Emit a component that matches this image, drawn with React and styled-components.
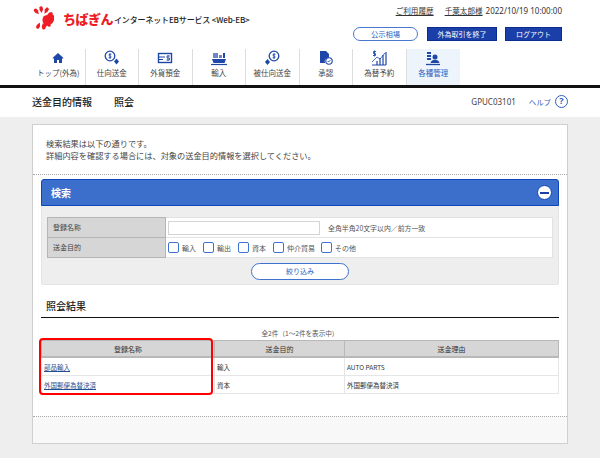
import styled, { createGlobalStyle } from 'styled-components';

const navItems = [
    { label: 'トップ(外為)', icon: 'home' },
    { label: '仕向送金', icon: 'coin' },
    { label: '外貨預金', icon: 'card' },
    { label: '輸入', icon: 'ship' },
    { label: '被仕向送金', icon: 'coinBack' },
    { label: '承認', icon: 'doc' },
    { label: '為替予約', icon: 'chart' },
    { label: '各種管理', icon: 'admin', active: true },
];

function NavIcon({ name }) {
    const c = '#1f47a8';
    if (name === 'home') return (
        <svg width="14" height="14" viewBox="0 0 14 14"><path d="M7 2 1.500 7l.8.8L3 7.300V12h3V9h2v3h3V7.300l.7.5.8-.8z" fill={c} /></svg>
    );
    if (name === 'coin') return (
        <svg width="16" height="16" viewBox="0 0 16 16">
            <circle cx="6" cy="6" r="4.800" fill="none" stroke={c} strokeWidth="1.300" />
            <path d="M7.500 4.200H5.200v1.800h1.600v1.800H4.500M6 3v6" fill="none" stroke={c} strokeWidth=".8" />
            <path d="m12.500 8.500 2.500 3-2.500 3-2.500-3z" fill={c} />
        </svg>
    );
    if (name === 'coinBack') return (
        <svg width="16" height="16" viewBox="0 0 16 16">
            <circle cx="10" cy="6" r="4.800" fill="none" stroke={c} strokeWidth="1.300" />
            <path d="M11.500 4.200H9.200v1.800h1.600v1.800H8.500M10 3v6" fill="none" stroke={c} strokeWidth=".8" />
            <path d="m3.500 9 2.500 3-2.500 3L1 12z" fill={c} />
        </svg>
    );
    if (name === 'card') return (
        <svg width="16" height="14" viewBox="0 0 16 14">
            <rect x="1.500" y="2.500" width="13" height="9" fill="none" stroke={c} strokeWidth="1.400" />
            <path d="M2 6h6M2 8.500h4" stroke={c} strokeWidth="1" />
            <path d="M13 5h-3v2h2.500v2H9.500M11 4v6" fill="none" stroke={c} strokeWidth=".8" />
        </svg>
    );
    if (name === 'ship') return (
        <svg width="16" height="15" viewBox="0 0 16 15">
            <path d="M1 8h14l-1.500 4h-11z" fill={c} />
            <path d="M2 2h5v5H2zM8 4h3v3H8z" fill="#6f86c4" />
            <path d="M12 2h2v5h-2z" fill={c} />
            <path d="M0 13.500h16" stroke={c} strokeWidth="1.200" />
        </svg>
    );
    if (name === 'doc') return (
        <svg width="14" height="16" viewBox="0 0 14 16">
            <path d="M1 1h6l3 3v3.500A4 4 0 0 0 6 13H1z" fill={c} />
            <circle cx="10" cy="11" r="3.200" fill="none" stroke={c} strokeWidth="1.100" />
            <path d="m8.600 11 1 1 1.800-1.800" fill="none" stroke={c} strokeWidth=".9" />
        </svg>
    );
    if (name === 'chart') return (
        <svg width="16" height="16" viewBox="0 0 16 16">
            <path d="M1 15h14" stroke={c} strokeWidth="1" />
            <path d="M6 15v-4M9 15V8M12 15V5M15 15V2" stroke={c} strokeWidth="1.200" />
            <path d="M1 12 6 7l3 2 5-6" fill="none" stroke={c} strokeWidth=".8" />
            <path d="M5 1.500H2.500v2h2v2H2M3.500 .5v6" fill="none" stroke={c} strokeWidth=".9" />
        </svg>
    );
    return (
        <svg width="16" height="15" viewBox="0 0 16 15">
            <path d="M2 1h4v2H2zM2 4h4v2H2zM2 7h4v2H2z" fill={c} />
            <circle cx="10" cy="6" r="2.500" fill={c} />
            <path d="M5.500 12c.5-2.500 2.500-3.200 4.500-3.200s4 .7 4.500 3.200z" fill={c} />
            <path d="M1 13.500h14" stroke={c} strokeWidth="1.300" />
        </svg>
    );
}

function LogoMark() {
    const petals = [-10, 25, 60, 95, 130, 165, 200, 235];
    return (
        <svg width="23" height="26" viewBox="0 0 23 26">
            {petals.map(a => (
                <path key={a} d="M9.200 4.500 9.500 2c.8-1 2.200-1 3 0l.3 2.500L11 8z" fill="#ee1c25" transform={`rotate(${a - 30} 11 13)`} />
            ))}
            <path d="M13 11c3-1.500 7-1.500 9.500-1 1.200 2 .8 6-1 8-1.500 1.500-4 2-5 2l-3.500 4.500L13 19c-2-2-2-6 0-8z" fill="#ee1c25" />
        </svg>
    );
}

export default function App() {
    return (
        <Page>
            <GlobalStyle />
            <Header>
                <TopRow>
                    <Brand>
                        <LogoMark />
                        <BankName>ちばぎん</BankName>
                        <ServiceName>インターネットEBサービス &lt;Web-EB&gt;</ServiceName>
                    </Brand>
                    <Utility>
                        <InfoLine>
                            <InfoLink>ご利用履歴</InfoLink>
                            <InfoLink>千葉太郎様</InfoLink>
                            <DateText>2022/10/19 10:00:00</DateText>
                        </InfoLine>
                        <ButtonLine>
                            <PillLink>公示相場</PillLink>
                            <NavyButton $width={70}>外為取引を終了</NavyButton>
                            <NavyButton $width={57}>ログアウト</NavyButton>
                        </ButtonLine>
                    </Utility>
                </TopRow>
                <Nav>
                    {navItems.map(item => (
                        <NavItem key={item.label} $active={item.active}>
                            <IconSlot><NavIcon name={item.icon} /></IconSlot>
                            <span>{item.label}</span>
                        </NavItem>
                    ))}
                </Nav>
            </Header>
            <TitleBar>
                <TitleText>
                    <span>送金目的情報</span>
                    <span>照会</span>
                </TitleText>
                <TitleSide>
                    <span>GPUC03101</span>
                    <HelpLink>ヘルプ<HelpMark>?</HelpMark></HelpLink>
                </TitleSide>
            </TitleBar>
            <Card>
                <Intro>
                    検索結果は以下の通りです。<br />
                    詳細内容を確認する場合には、対象の送金目的情報を選択してください。
                </Intro>
                <CardBody>
                    <SearchPanel>
                        <SearchHeader>
                            <span>検索</span>
                            <CollapseButton><i /></CollapseButton>
                        </SearchHeader>
                        <SearchBody>
                            <FormTable>
                                <FormLabel>登録名称</FormLabel>
                                <FormValue>
                                    <NameInput />
                                    <Hint>全角半角20文字以内／前方一致</Hint>
                                </FormValue>
                                <FormLabel $last>送金目的</FormLabel>
                                <FormValue $last>
                                    {['輸入', '輸出', '資本', '仲介貿易', 'その他'].map(t => (
                                        <CheckLabel key={t}><CheckBox />{t}</CheckLabel>
                                    ))}
                                </FormValue>
                            </FormTable>
                            <FilterButton>絞り込み</FilterButton>
                        </SearchBody>
                    </SearchPanel>
                    <ResultTitle>照会結果</ResultTitle>
                    <ResultCount>全2件（1～2件を表示中）</ResultCount>
                    <TableWrap>
                        <ResultTable>
                            <thead>
                                <tr>
                                    <th>登録名称</th>
                                    <th>送金目的</th>
                                    <th>送金理由</th>
                                </tr>
                            </thead>
                            <tbody>
                                <tr>
                                    <td><RowLink>部品輸入</RowLink></td>
                                    <td>輸入</td>
                                    <td>AUTO PARTS</td>
                                </tr>
                                <tr>
                                    <td><RowLink>外国郵便為替決済</RowLink></td>
                                    <td>資本</td>
                                    <td>外国郵便為替決済</td>
                                </tr>
                            </tbody>
                        </ResultTable>
                        <Highlight />
                    </TableWrap>
                </CardBody>
                <CardFooter />
            </Card>
        </Page>
    );
}

const GlobalStyle = createGlobalStyle`
    body {
        margin: 0;
        background: #eeeeee;
        font-family: "Noto Sans CJK JP", "Noto Sans", sans-serif;
        color: #333;
    }
`;

const Page = styled.div`
    width: 600px;
    height: 458px;
    overflow: hidden;
    background: #eeeeee;
`;

const Header = styled.header`
    height: 85px;
    background: #fff;
    border-bottom: 3px solid #111;
`;

const TopRow = styled.div`
    height: 49px;
    display: flex;
    justify-content: space-between;
    padding: 5px 38px 0 31px;
    box-sizing: border-box;
`;

const Brand = styled.div`
    display: flex;
    align-items: flex-start;
`;

const BankName = styled.span`
    margin: 6px 0 0 9px;
    font-size: 13px;
    line-height: 16px;
    font-weight: 900;
    color: #ee1c25;
    letter-spacing: -.5px;
    white-space: nowrap;
`;

const ServiceName = styled.span`
    margin: 9px 0 0 1px;
    font-size: 8px;
    line-height: 12px;
    font-weight: 500;
    color: #222;
    white-space: nowrap;
    letter-spacing: -.15px;
`;

const Utility = styled.div`
    display: flex;
    flex-direction: column;
    align-items: flex-end;
`;

const InfoLine = styled.div`
    display: flex;
    align-items: center;
    height: 12px;
    font-size: 8px;
    line-height: 12px;
    white-space: nowrap;
`;

const InfoLink = styled.a`
    margin-right: 11px;
    color: #333;
    font-size: 7.600px;
    text-decoration: underline;
    &:nth-child(2) {
        margin-right: 3px;
    }
`;

const DateText = styled.span`
    font-family: "Noto Sans", sans-serif;
    font-size: 8px;
    color: #333;
`;

const ButtonLine = styled.div`
    display: flex;
    align-items: center;
    gap: 8px;
    margin-top: 10px;
`;

const PillLink = styled.div`
    width: 65px;
    height: 14px;
    margin-right: 1px;
    box-sizing: border-box;
    border: 1px solid #4a78cf;
    border-radius: 7px;
    background: #fff;
    color: #2f5fc0;
    font-size: 7.300px;
    line-height: 12px;
    text-align: center;
`;

const NavyButton = styled.div`
    width: ${p => p.$width}px;
    height: 14px;
    box-sizing: border-box;
    background: #1a3fa8;
    border: 1px solid #0c2b8f;
    color: #fff;
    font-size: 7px;
    line-height: 12px;
    text-align: center;
    white-space: nowrap;
`;

const Nav = styled.nav`
    display: flex;
    height: 36px;
    padding-left: 32px;
`;

const NavItem = styled.div`
    width: 53.500px;
    flex: none;
    box-sizing: border-box;
    display: flex;
    flex-direction: column;
    align-items: center;
    font-size: 7.500px;
    line-height: 12px;
    white-space: nowrap;
    color: ${p => (p.$active ? '#2f5fc0' : '#444')};
    background: ${p => (p.$active ? '#eef4fc' : 'transparent')};
    border-right: ${p => (p.$active ? 'none' : '1px solid #dddddd')};
`;

const IconSlot = styled.div`
    height: 18px;
    display: flex;
    align-items: center;
    justify-content: center;
`;

const TitleBar = styled.div`
    height: 29px;
    background: #fff;
    display: flex;
    align-items: center;
    justify-content: space-between;
    padding: 0 32px;
`;

const TitleText = styled.div`
    display: flex;
    gap: 22px;
    margin-top: -2px;
    font-size: 10px;
    font-weight: 500;
    color: #222;
`;

const TitleSide = styled.div`
    display: flex;
    align-items: center;
    gap: 13px;
    margin-top: -2px;
    font-family: "Noto Sans", sans-serif;
    font-size: 8px;
    color: #444;
`;

const HelpLink = styled.span`
    display: flex;
    align-items: center;
    gap: 4px;
    font-family: "Noto Sans CJK JP", sans-serif;
    font-size: 7.400px;
    color: #2f5fc0;
`;

const HelpMark = styled.span`
    width: 13px;
    height: 13px;
    box-sizing: border-box;
    border: 1.500px solid #2f5fc0;
    border-radius: 50%;
    font-family: "Noto Sans", sans-serif;
    font-size: 9px;
    font-weight: 700;
    line-height: 10px;
    text-align: center;
`;

const Card = styled.main`
    width: 536px;
    box-sizing: border-box;
    margin: 7px 0 0 32px;
    background: #fff;
    border: 1px solid #cfcfcf;
    border-width: 1px 1px 1.500px 1px;
`;

const Intro = styled.div`
    height: 50px;
    box-sizing: border-box;
    padding: 12px 0 0 13px;
    font-size: 8.200px;
    line-height: 12px;
    color: #444;
    border-bottom: 1px dotted #aaa;
`;

const CardBody = styled.div`
    padding: 4px 8px 0 8px;
    height: 241px;
    box-sizing: border-box;
`;

const SearchPanel = styled.section`
    background: #eeeeee;
    border-radius: 3px;
`;

const SearchHeader = styled.div`
    height: 27px;
    box-sizing: border-box;
    background: #3c6fcb;
    border: 1px solid #0f45b8;
    border-width: 1px 1px 1.500px 1px;
    border-radius: 3px 3px 0 0;
    display: flex;
    align-items: center;
    justify-content: space-between;
    padding: 0 6px 0 9px;
    color: #fff;
    font-size: 10px;
    font-weight: 700;
`;

const CollapseButton = styled.span`
    width: 15px;
    height: 15px;
    box-sizing: border-box;
    border: 1px solid #0f45b8;
    border-radius: 50%;
    background: #fff;
    display: flex;
    align-items: center;
    justify-content: center;
    i {
        display: block;
        width: 9px;
        height: 2px;
        background: #1a3fa8;
    }
`;

const SearchBody = styled.div`
    height: 79px;
    box-sizing: border-box;
    padding: 11px 5px 0 5px;
    border: 1px solid #e4e4e4;
    border-top: none;
    border-radius: 0 0 3px 3px;
`;

const FormTable = styled.div`
    display: grid;
    grid-template-columns: 119px 1fr;
    grid-template-rows: 20px 21px;
`;

const FormLabel = styled.div`
    background: #d6d6d6;
    border: 1px solid #b5b5b5;
    border-bottom-width: ${p => (p.$last ? '1px' : '0')};
    box-sizing: border-box;
    padding-left: 5px;
    font-size: 7px;
    line-height: 19px;
    color: #444;
`;

const FormValue = styled.div`
    background: #fff;
    box-sizing: border-box;
    border: 1px solid #e2e2e2;
    border-left: none;
    border-bottom-width: ${p => (p.$last ? '1px' : '0')};
    display: flex;
    align-items: center;
    padding-left: 2px;
    font-size: 7px;
    color: #555;
`;

const NameInput = styled.div`
    width: 152px;
    height: 14px;
    box-sizing: border-box;
    border: 1px solid #d4d4d4;
    background: #fff;
`;

const Hint = styled.span`
    margin-left: 8px;
    font-size: 6.900px;
`;

const CheckLabel = styled.label`
    display: flex;
    align-items: center;
    gap: 3px;
    margin-right: 7px;
    white-space: nowrap;
    &:nth-child(4) {
        margin-right: 6px;
    }
`;

const CheckBox = styled.span`
    width: 11px;
    height: 11px;
    box-sizing: border-box;
    border: 1.500px solid #3f72cf;
    border-radius: 2px;
    background: #fff;
`;

const FilterButton = styled.div`
    width: 98px;
    height: 17px;
    box-sizing: border-box;
    margin: 5px auto 0;
    border: 1px solid #3f72cf;
    border-radius: 9px;
    background: #fff;
    color: #2f5fc0;
    font-size: 7px;
    line-height: 15px;
    text-align: center;
`;

const ResultTitle = styled.h2`
    margin: 11px 0 0;
    height: 21px;
    padding-left: 5px;
    border-bottom: 1.500px solid #111;
    font-size: 10px;
    line-height: 19px;
    font-weight: 500;
    color: #222;
`;

const ResultCount = styled.div`
    margin-top: 9px;
    height: 14px;
    text-align: center;
    font-size: 6.600px;
    line-height: 12px;
    color: #555;
`;

const TableWrap = styled.div`
    position: relative;
    margin-top: -1px;
`;

const ResultTable = styled.table`
    width: 100%;
    border-collapse: collapse;
    table-layout: fixed;
    font-size: 6.500px;
    color: #333;
    th {
        height: 15px;
        padding: 0;
        background: #d6d6d6;
        border: 1px solid #b8b8b8;
        border-width: 1px 1.500px 2px 1px;
        font-weight: 400;
        font-size: 7px;
    }
    th:nth-child(1) { width: 172px; }
    th:nth-child(2) { width: 129px; }
    td {
        height: 17px;
        padding: 0 2px;
        border: 1px solid #e6e6e6;
        border-width: 0 1.500px 1.500px 1px;
    }
`;

const RowLink = styled.a`
    color: #1f4f8f;
    text-decoration: underline;
`;

const Highlight = styled.div`
    position: absolute;
    left: -2px;
    top: -2px;
    width: 174px;
    height: 57px;
    box-sizing: border-box;
    border: 2.500px solid #f00;
    border-radius: 4px;
`;

const CardFooter = styled.div`
    height: 26px;
    background: #f8f8f8;
    border-top: 1px dotted #aaa;
`;
